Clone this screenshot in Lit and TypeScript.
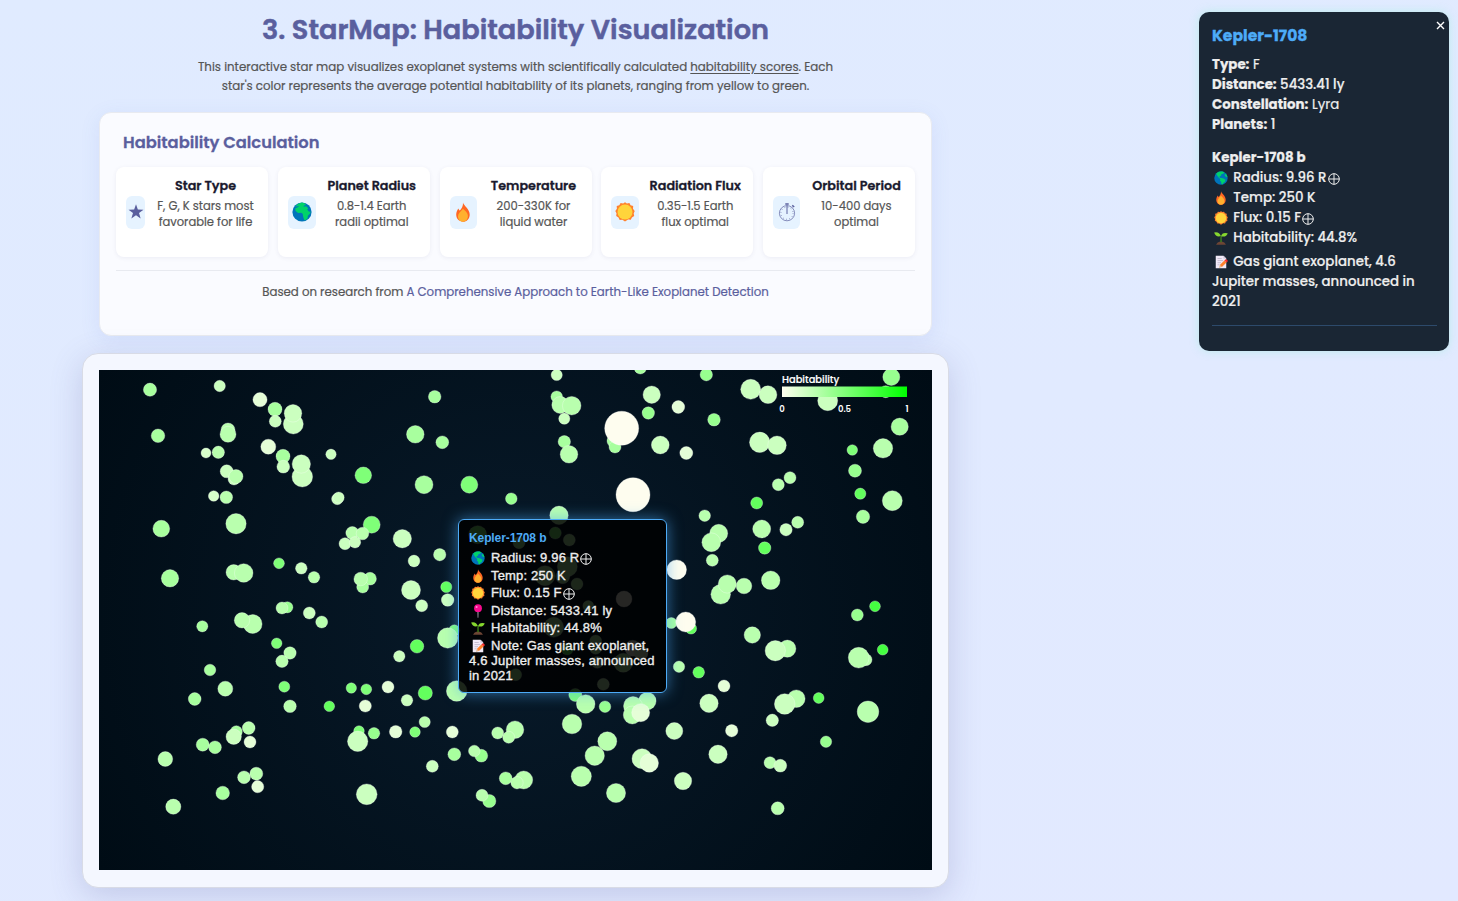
import { LitElement, html, svg, css } from "lit";
import { customElement } from "lit/decorators.js";

type Star = [number, number, number, string];

/* Each row: x, y, radius and a habitability class letter. */
const STARS_RAW = `
150 389.7 6.6 E;219.7 386 5.7 C;260 399.7 7.1 B;275 409.3 7 E;275.3 421.3 6 C;293.3 424 10 C;293 413.3 8.8 C;158 435.8 6.8 E;228 430 7 D;228 434.3 8 D
206 453 5 b;218.3 452.3 6.2 D;268.3 446.7 7.5 B;283 456.3 7 E;283.3 466.7 6.4 C;302.3 476.7 10.3 C;301.3 464 9.2 C;331 454.3 5.2 C;226.7 471.3 6.5 C;234 479 6 C;236 476.5 7 D
213.7 496 5.3 b;226.3 497.3 6.3 D;236 523.7 10.2 D;161.3 528.7 8.4 E;337.3 499 5.7 C;338.7 497.5 5.5 C;279 563.3 5.4 F;301.3 568.3 5.8 C;314 577.3 5.8 D;170 578.3 8.7 E;233.7 572.3 7.7 D;243.7 573 9.3 D
287.3 607.3 5.6 e;282 608 6 D;309.3 613 6 C;321.7 622 6 D;202.3 626.3 5.6 E;252.7 624 9.4 D;242 620.3 7.7 D;276.7 643.3 5.3 F;290 653 6.2 D;282 661.3 6.2 D;210 670 5.8 E;225.3 688.7 7.5 D;194.7 699 6.4 E
284.3 686.7 5.5 F;290 706.3 6.3 D;351.3 688 5.2 F;329.3 706.3 5.3 G;236.3 731.7 6 E;233.7 736.7 7.7 C;248.7 728 6.4 D;250 742 6 B;202.7 744.7 6.5 E;215 747.3 6.4 E;165.3 759 7.4 D;244 777.3 6.4 D;256.3 773.7 6.5 D;257.7 786.7 6.1 B;222.7 793 6.8 E;173.3 806.7 7.6 D
434.7 396.7 6.3 E;415.3 434.3 8.8 E;442.3 442.3 6.4 E;363.3 475.3 8.3 F;424 484.7 9 E;469.3 484.7 8.5 F;511.3 498.7 5.8 e;556.7 375 5.6 C;556.7 396.7 5.8 E;560.3 405 8.5 D;571.7 405.7 9.3 D;564.3 418.7 5.6 C;564.3 441.7 6.2 E;569 454.3 8.8 D
613.5 441 6.5 E;615 447 6 E;621.7 428.2 17 A;633 494.7 17 A;640.3 368 6 E;559 515.3 9.2 D;371.7 524.7 8.5 F;352.3 533 6.5 D;362.5 533.5 6.3 D;345 543.7 6 C;355 542.3 5.7 C;402.3 538.7 9.2 C;414 561 5.9 C;439.7 554.7 6.2 D
370 578.7 6.4 E;362.7 587 6 E;360.7 579 6.8 D;411 590 9.5 C;446.3 587 5.6 G;447.7 600 6.3 C;421.7 605.7 6 C;454.3 630.3 5.5 F;447.7 638 10.2 D;417 646.3 6.8 G;399.3 656.3 5.7 C;388 687 6 B;366.3 689.3 5.4 F;365.3 706 6.1 B;407 700.3 5.8 C;425.3 693 7.1 G;456.7 691 10.3 D
424.7 722 5.6 D;359 731 5.3 F;357.7 741.3 10.2 C;374 733.3 5.8 e;395.7 731.7 6.3 B;415 732 5.3 F;452.3 732 6 B;497.7 733 6 D;515 729.7 8.8 D;508.7 737.3 6 D;454.3 754.3 6.4 E;481.3 755.7 6.4 e;474.3 751 5.8 D;432.3 766.3 6 C;505.7 778.3 6.4 E;523.7 780 9 D;517 782.7 6.2 D;489.3 801 6.6 e;482 795.3 6 D;366.7 794.3 10.4 C
575.3 695 6.5 F;585.7 704 9.3 D;605 706.7 5.8 e;647.3 701 8.8 D;633 706 9.5 D;632.3 715 9 D;640.7 712.7 9 B;572 724 9.8 D;607.3 741.3 9.5 D;594.7 755.7 9.7 D;581.3 776.3 10.1 D;616 793 9.6 D;642 758.7 10 C;649.3 763 9.2 B
706.3 374.7 6.2 e;651.7 394.7 8.7 C;678.3 407 6.4 B;648.3 413 6.2 e;714 419.7 6.3 e;660.3 445 8.9 C;686.3 453 6.5 B;750.7 389.3 10 C;768 394.7 8.9 C;827.7 400.7 10 C;885.7 391.7 6 E;891.3 377 8.5 e;759.7 442.3 10.2 C;777 445.3 9.3 C;899.7 426.7 8.6 E;883 448.3 9.7 D
852.3 450 5.3 F;855 470.7 6.5 e;860.3 493.7 5.6 G;892.3 500.7 10 D;863 516.7 6.7 E;790 477.7 6 D;778.3 484.7 6 D;756.7 503 6 G;704.7 515.7 5.8 D;718.7 533.3 9 D;711.3 542.3 9.4 D;761.7 529 9 D;764.7 548 6.2 G;786 529.7 6.2 C;797.7 522.3 6 D;712.3 560.3 6 D;676.7 569.7 9.8 A
720.7 594.3 9.8 D;727.3 584 9.1 D;744 586 7.8 D;770.7 580.3 9.3 D;857.3 615 6 e;875 606.3 5.4 H;671.3 623 5.5 E;691 628.5 5.6 G;685.7 622 10 A;752.3 635 8.2 D;787.3 648.7 8.6 D;775.3 650.7 10.2 C;866 659.7 6 D;858.7 657.7 10.4 D;882.7 649.7 5.4 H;679 666.7 5.7 D;698.7 672.3 5.8 G
724 686 6 B;709 703.3 9.2 C;796.3 698.7 8.8 D;784.7 704 10.3 C;818.7 698 5.4 G;772.3 720.3 6.2 C;868 711.7 10.8 D;674.3 731 8.5 C;731.7 730.7 6.2 B;826 741.7 5.7 e;718 754.3 9.2 C;683 781 8.7 C;770 762.7 6 D;780.3 765.7 6.4 C;777.7 808.3 6.5 D
477.7 534.7 9 F;555.3 533 6 F;519 542.7 6 E;569.3 540 6 D;567.3 566.7 10 D;545 575.7 10 D;562.7 576.7 7 D;577 584 6 D;588.3 606 5.5 D;624 599 8 A;553.7 627.3 10 D;595.7 641 6 D;595.7 648.3 6 D;567.3 649 6 G;632.7 648.3 8 A;641 653 7 B;597.3 662.3 6 C;623.3 662.7 9.5 D;515.7 674.7 6 E;603.3 684.3 6 C`;

const SCORE: Record<string, number> = { A: 0, B: 0.1, b: 0.15, C: 0.2, D: 0.27, E: 0.34, e: 0.4, F: 0.5, G: 0.61, H: 0.73 };

const STARS: Star[] = STARS_RAW.trim().split(/[;\n]/).map((row) => {
  const [x, y, r, k] = row.trim().split(" ");
  return [Number(x) - 99, Number(y) - 370, Number(r), k];
});

const starColor = (k: string) => {
  const t = SCORE[k];
  return `rgb(${Math.round(254 * (1 - t))},${Math.round(253 + 2 * Math.min(1, t * 5))},${Math.round(239 * (1 - t))})`;
};

const earth = svg`<circle cx="10" cy="10" r="9.6" fill="#0074ba"/><path d="M3.2 4.8Q6 1 10 .6l3 .8 1 1.6-2 .6-.4 1.2 2.6-.5 2 2-1 1.4 1.9 2.1 1.5-.4-.5 2.2-2.2 2.2-.3 2.6-1.8 1.6-1.4.2-1.2-3.3-.5-3.1-1.6-1.1-3 .3L3.6 9l-.5-2.4 2.6-1.4 1.6-1.4z" fill="#00d26a"/>`;
const earthWest = svg`<circle cx="10" cy="10" r="9.6" fill="#0074ba"/><path d="M4 2.7Q8 0 12.5 .8L15 2.4 12.6 4l-2 .6-.7 2.3-2.1.6.4 2 2.3.6 3 .5 3 2-1 3-2 1.3-1.2 2.3-1.6-.5-.5-3.2-1.7-1.7.6-2.4L7 9.8 5 7 3.2 4.4zM15.6 4l2.4 1.5 1.4 3.6-2.3-.9-1.8-2z" fill="#00d26a"/>`;
const fire = svg`<path d="M10 .4c.5 3 6.7 6.4 6.7 12 0 4.5-3 7.3-6.7 7.3S3.2 17 3.2 12.6c0-3 1.3-5 2.3-6.2.2 1.2.7 1.7 1.4 2C8.500 6.500 10.300 4 10 .4z" fill="#ff6723"/><path d="M10 6.800c1.800 2 4.900 3.700 4.900 7.200 0 3.500-2.200 5.700-4.900 5.700S5 17.500 5 14.200c0-2.500 2.600-4.700 5-7.400z" fill="#ffb02e"/>`;
const sun = svg`<path d="M10 .3l1.900 1.300 2.500-.5 1.200 2.100 2.600.9-.2 2.700L19.700 9l-1 2.400.5 2.600-2.300 1.400-1.100 2.300-2.700-.1L10 19.600l-2.600-1.800-2.700.1-1.200-2.400L1.200 14l.3-2.700L.3 9l1.600-2.200-.2-2.700 2.600-.9 1.300-2.100 2.600.5z" fill="#ff822d"/><circle cx="10" cy="10" r="7.500" fill="#ffd43b"/>`;
const plant = svg`<path d="M3 19.500q1.500-3.800 4.500-4.200h5q3 .6 4.500 4.200z" fill="#6d4534"/><path d="M9.200 16V7.500l1.700-.4V16z" fill="#44911b"/><path d="M.2 2.200Q7.500.6 9.800 7.300 2.800 9.500.2 2.200zM10 7.500q1.500-6.300 9.600-4.300Q17.500 9.600 10 7.500z" fill="#86d72f"/>`;
const memo = svg`<path d="M2.500 1h11l4 4v14h-15z" fill="#f1eaf8"/><path d="M13.500 1v4h4z" fill="#cdc4d6"/><path d="M5 5h6M5 8h8M5 11h5M5 14h3" stroke="#b5abc0" stroke-width="1"/><path d="M7 18.600l1.300-4.400 3 3z" fill="#e3bb94"/><path d="M8.300 14.200l6.500-6.400 3.100 3-6.600 6.400z" fill="#ff822d"/><path d="M14.800 7.800l1.500-1.500q.8-.7 1.600 0l1.500 1.500q.8.800 0 1.600l-1.500 1.400z" fill="#f8312f"/>`;
const pin = svg`<path d="M9.200 10h1.600l-.3 9.700h-1z" fill="#b4acbc"/><circle cx="10" cy="6" r="5.600" fill="#f70a8d"/><circle cx="8" cy="4.300" r="1.500" fill="#ff8fd0"/>`;
const starGlyph = svg`<path d="M10 2.200l1.850 5.350 5.650.1-4.500 3.450 1.650 5.400L10 13.300 5.350 16.500l1.650-5.400L2.500 7.650l5.650-.1z" fill="#5a5f9e"/>`;
const watch = svg`<g fill="none" stroke="#5c629f"><circle cx="10" cy="11.200" r="7.600" stroke-width=".7"/><circle cx="10" cy="11.200" r="6.100" stroke-width="1" stroke-dasharray=".6 2.594"/><path d="M10 3.500V12" stroke-width="1"/><path d="M15.300 5.400l1.200-1.300" stroke-width=".8"/><path d="M8.300 1.900h3.400M15.300 3.300l1.900 1.700" stroke-width="1.500"/></g>`;

const icon = (g: unknown, cls = "emoji") => html`<svg class=${cls} viewBox="0 0 20 20">${g}</svg>`;
const oplus = html`<svg class="oplus" viewBox="0 0 12 12"><path d="M6 .6v10.800M.6 6h10.800" stroke="currentColor"/><circle cx="6" cy="6" r="5.300" fill="none" stroke="currentColor"/></svg>`;

const FACTORS = [
  { cls: "f1", title: "Star Type", lines: ["F, G, K stars most", "favorable for life"], icon: starGlyph },
  { cls: "f2", title: "Planet Radius", lines: ["0.8-1.4 Earth", "radii optimal"], icon: earth },
  { cls: "f3", title: "Temperature", lines: ["200-330K for", "liquid water"], icon: fire },
  { cls: "f4", title: "Radiation Flux", lines: ["0.35-1.5 Earth", "flux optimal"], icon: sun },
  { cls: "f5", title: "Orbital Period", lines: ["10-400 days", "optimal"], icon: watch },
];

@customElement("app-root")
export class AppRoot extends LitElement {
  static styles = css`
    :host {
      display: block;
      position: relative;
      height: 901px;
      overflow: hidden;
      box-sizing: border-box;
      padding-left: 82px;
      background: linear-gradient(170deg, #e0ebff 0%, #e1eaff 50%, #e2e9ff 100%);
      font-family: Poppins, Inter, "Open Sans", sans-serif;
      color: #555;
      -webkit-text-stroke: 0.2px currentColor;
    }
    * { box-sizing: border-box; }
    h1, h2, h3, p { margin: 0; white-space: nowrap; }
    .column { width: 867px; display: flex; flex-direction: column; align-items: center; }
    h1 { margin-top: 9px; font-size: 27.200px; line-height: 42px; font-weight: 600; color: #5a5f9e; -webkit-text-stroke-width: 0.5px; }
    .intro { margin-top: 7px; font-size: 11.820px; line-height: 19px; text-align: center; }
    .intro u { text-underline-offset: 2px; }
    .calc {
      margin-top: 16px; width: 833px; height: 224px; padding: 15px 16px; border: 1px solid #e8eaf0;
      border-radius: 12px; background: #fafbff; box-shadow: 0 4px 20px rgba(90, 120, 220, 0.1);
    }
    h2 { margin-left: 7px; font-size: 16.300px; line-height: 29px; font-weight: 600; color: #5a5f9e; -webkit-text-stroke-width: 0.3px; }
    .factors { margin-top: 10px; display: grid; grid-template-columns: repeat(5, 152px); gap: 9.75px; }
    .factor {
      height: 90px; padding: 0 10px; display: flex; align-items: center; justify-content: space-between;
      background: #fff; border-radius: 8px; box-shadow: 0 1px 4px rgba(60, 70, 120, 0.08);
    }
    .tile { flex: none; width: 28px; height: 33px; border-radius: 6px; background: #e6f3ff; display: flex; align-items: center; justify-content: center; }
    .f1 .tile { width: 19px; }
    .f3 .tile, .f5 .tile { width: 27px; }
    .glyph { flex: none; width: 20px; height: 20px; display: block; margin-top: -1px; }
    .copy { height: 72px; text-align: center; display: flex; flex-direction: column; align-items: center; }
    h3 { font-size: 12.750px; line-height: 20px; font-weight: 600; color: #1a1a2e; -webkit-text-stroke-width: 0.3px; }
    .copy p { font-size: 11.550px; line-height: 16px; }
    .copy h3 + p { margin-top: 2px; }
    .f1 .copy { width: 105px; }
    .f2 .copy { width: 98px; margin-right: -1px; }
    .f3 .copy { width: 95px; margin-right: .5px; }
    .f4 .copy { width: 98px; margin-right: -1px; }
    .f5 .copy { width: 95px; margin-right: 1px; }
    .source { margin-top: 13px; border-top: 1px solid #e8eaf0; padding-top: 12px; text-align: center; font-size: 11.780px; line-height: 19px; }
    .source a { color: #5a5f9e; }
    .frame {
      margin-top: 17px; width: 867px; height: 535px; padding: 16px; border: 1px solid #d8dbe6; border-radius: 16px;
      background: #f4f7ff; box-shadow: 0 8px 32px rgba(90, 95, 158, 0.24);
    }
    .sky { position: relative; width: 833px; height: 500px; background: radial-gradient(circle at 50% 50%, #081a2a 0%, #000c15 100%); }
    .map { display: block; width: 833px; height: 500px; -webkit-text-stroke-width: 0; }
    .map circle { stroke: #fff; stroke-opacity: 0.5; stroke-width: 0.6; }
    .legend { font-size: 9.900px; font-weight: 500; fill: #fff; stroke: #fff; stroke-width: 0.2px; }
    .tick { font-size: 8.500px; font-weight: 600; fill: #fff; text-anchor: middle; }
    .tip {
      position: absolute; left: 359px; top: 149px; width: 209px; height: 174px; padding: 10px; color: #eee;
      border: 1px solid #4dabf7; border-radius: 6px; background: rgba(0, 0, 0, 0.85); letter-spacing: 0.17px;
      box-shadow: 0 0 15px rgba(77, 171, 247, 0.6); font: 13px/15px "Liberation Sans", Arial, sans-serif;
      -webkit-text-stroke-width: 0.35px;
    }
    .tip div { white-space: nowrap; }
    .tip .row { height: 17.500px; line-height: 17.500px; }
    .tip .row.last { height: 16px; }
    .tip .name { height: 19px; line-height: 17px; font-size: 12px; font-weight: 700; color: #4dabf7; letter-spacing: -0.1px; -webkit-text-stroke-width: 0; }
    .emoji { display: inline-block; width: 14px; height: 14px; margin: 0 6px 0 2px; vertical-align: -3px; }
    .panel .emoji { margin-right: 5.300px; }
    .oplus { display: inline-block; width: 12px; height: 12px; margin-left: 1px; vertical-align: -3px; }
    .panel {
      position: absolute; left: 1199px; top: 12px; width: 250px; height: 339px; padding: 14px 12px 0 13px; border-radius: 10px;
      background: #1a2634; color: #eee; box-shadow: 0 0 10px rgba(120, 240, 200, 0.35); font-size: 13.350px; line-height: 20px;
      white-space: nowrap; font-weight: 500;
    }
    .panel h2 { margin: 0 0 9px; font-size: 15.600px; line-height: 20px; color: #4dabf7; font-weight: 700; }
    .panel b { font-weight: 700; }
    .planet { margin-top: 13px; }
    .note { margin-top: 4px; }
    .light { font-weight: 400; }
    .rule { margin-top: 13px; border-top: 1px solid #2d4a6b; }
    .close { position: absolute; right: 4px; top: 9px; width: 9px; height: 9px; }
    .close path { stroke: #fff; stroke-width: 1.400; }
  `;

  render() {
    return html`
      <div class="column">
        <h1>3. StarMap: Habitability Visualization</h1>
        <div class="intro">
          <p>This interactive star map visualizes exoplanet systems with scientifically calculated <u>habitability scores</u>. Each</p>
          <p>star's color represents the average potential habitability of its planets, ranging from yellow to green.</p>
        </div>
        <section class="calc">
          <h2>Habitability Calculation</h2>
          <div class="factors">
            ${FACTORS.map((f) => html`<div class="factor ${f.cls}">
              <div class="tile">${icon(f.icon, "glyph")}</div>
              <div class="copy"><h3>${f.title}</h3>${f.lines.map((l) => html`<p>${l}</p>`)}</div>
            </div>`)}
          </div>
          <p class="source">Based on research from <a>A Comprehensive Approach to Earth-Like Exoplanet Detection</a></p>
        </section>
        <section class="frame">
          <div class="sky">
            <svg class="map" viewBox="0 0 833 500">
              <defs><linearGradient id="ramp"><stop offset="0" stop-color="#fffff0"/><stop offset="1" stop-color="#00ff00"/></linearGradient></defs>
              ${STARS.map(([x, y, r, k]) => svg`<circle cx=${x} cy=${y} r=${r} fill=${starColor(k)}></circle>`)}
              <rect x="683" y="16.500" width="125" height="10.500" fill="url(#ramp)"></rect>
              <text class="legend" x="683" y="13">Habitability</text>
              <text class="tick" x="683" y="42">0</text>
              <text class="tick" x="745.500" y="42">0.5</text>
              <text class="tick" x="808" y="42">1</text>
            </svg>
            <div class="tip">
              <div class="name">Kepler-1708 b</div>
              <div class="row">${icon(earthWest)}Radius: 9.96 R${oplus}</div>
              <div class="row">${icon(fire)}Temp: 250 K</div>
              <div class="row">${icon(sun)}Flux: 0.15 F${oplus}</div>
              <div class="row">${icon(pin)}Distance: 5433.41 ly</div>
              <div class="row">${icon(plant)}Habitability: 44.8%</div>
              <div class="row last">${icon(memo)}Note: Gas giant exoplanet,</div>
              <div>4.6 Jupiter masses, announced</div>
              <div>in 2021</div>
            </div>
          </div>
        </section>
      </div>
      <aside class="panel">
        <svg class="close" viewBox="0 0 9 9"><path d="M1 1l7 7M8 1L1 8"/></svg>
        <h2>Kepler-1708</h2>
        <div class="light"><b>Type:</b> F</div>
        <div><b>Distance:</b> 5433.41 ly</div>
        <div class="light"><b>Constellation:</b> Lyra</div>
        <div><b>Planets:</b> 1</div>
        <div class="planet"><b>Kepler-1708 b</b></div>
        <div>${icon(earthWest)}Radius: 9.96 R${oplus}</div>
        <div>${icon(fire)}Temp: 250 K</div>
        <div>${icon(sun)}Flux: 0.15 F${oplus}</div>
        <div>${icon(plant)}Habitability: 44.8%</div>
        <div class="note">${icon(memo)}Gas giant exoplanet, 4.6</div>
        <div>Jupiter masses, announced in</div>
        <div>2021</div>
        <div class="rule"></div>
      </aside>
    `;
  }
}
